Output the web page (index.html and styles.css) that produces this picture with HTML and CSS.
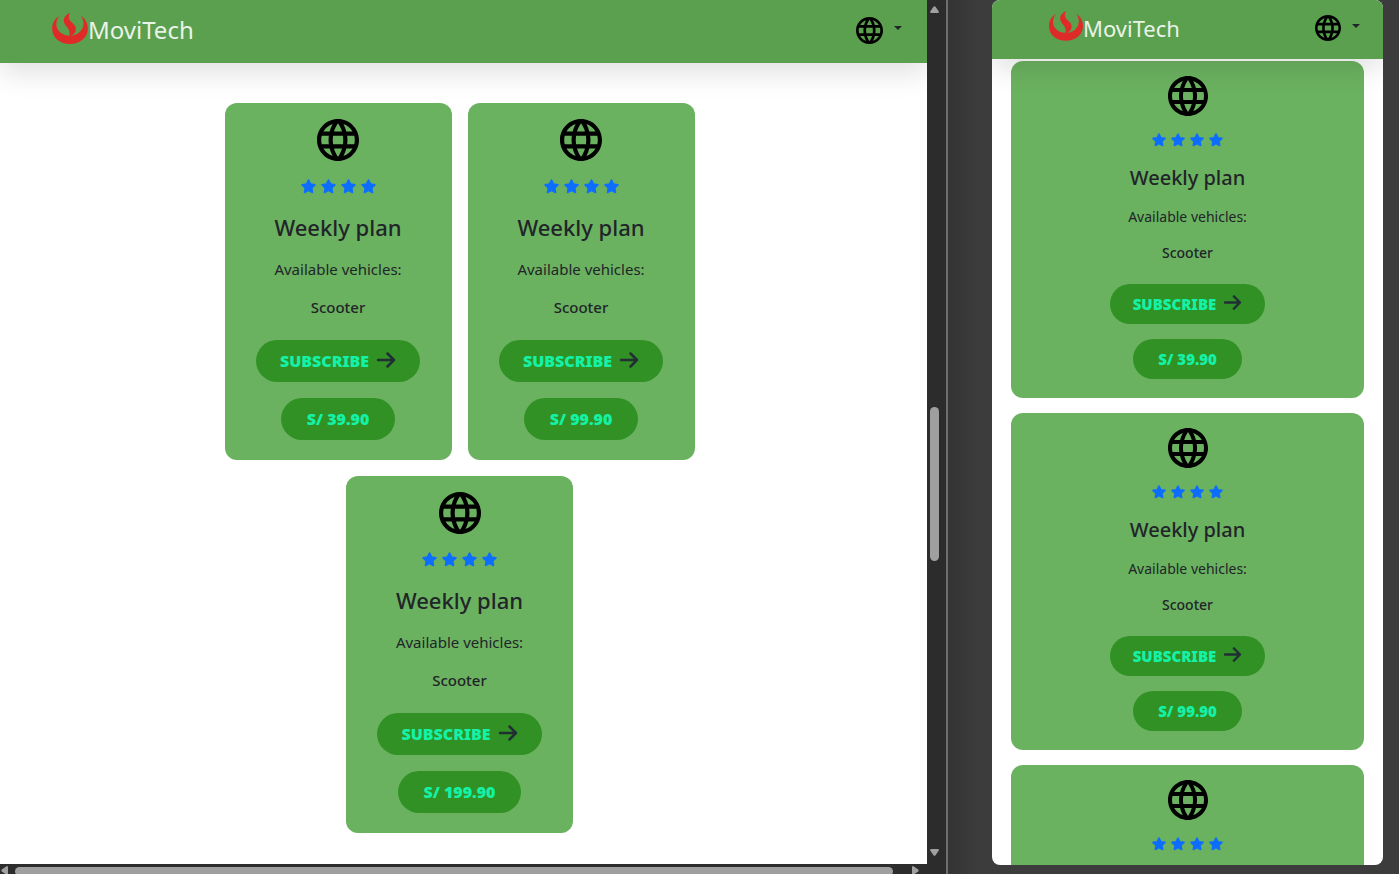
FILE: index.html
```html
<!DOCTYPE html>
<html lang="en">
<head>
<meta charset="utf-8">
<title>MoviTech</title>
<link rel="stylesheet" href="styles.css">
</head>
<body>
<svg class="sprite" aria-hidden="true">
  <symbol id="globe" viewBox="2 2 20 20"><path d="M11.99 2C6.47 2 2 6.48 2 12s4.47 10 9.99 10C17.52 22 22 17.52 22 12S17.52 2 11.99 2zm6.93 6h-2.95c-.32-1.25-.78-2.45-1.38-3.56 1.84.63 3.37 1.91 4.33 3.56zM12 4.04c.83 1.2 1.48 2.53 1.91 3.96h-3.82c.43-1.43 1.08-2.76 1.91-3.96zM4.26 14C4.1 13.36 4 12.69 4 12s.1-1.36.26-2h3.38c-.08.66-.14 1.32-.14 2 0 .68.06 1.34.14 2H4.26zm.82 2h2.95c.32 1.25.78 2.45 1.38 3.56-1.84-.63-3.37-1.9-4.33-3.56zm2.95-8H5.08c.96-1.66 2.49-2.93 4.33-3.56C8.81 5.55 8.35 6.75 8.03 8zM12 19.96c-.83-1.2-1.48-2.53-1.91-3.96h3.82c-.43 1.43-1.08 2.76-1.91 3.96zM14.34 14H9.66c-.09-.66-.16-1.32-.16-2 0-.68.07-1.35.16-2h4.68c.09.65.16 1.32.16 2 0 .68-.07 1.34-.16 2zm.25 5.56c.6-1.11 1.06-2.31 1.38-3.56h2.95c-.96 1.65-2.49 2.93-4.33 3.56zM16.36 14c.08-.66.14-1.32.14-2 0-.68-.06-1.34-.14-2h3.38c.16.64.26 1.31.26 2s-.1 1.36-.26 2h-3.38z"/></symbol>
  <symbol id="logo" viewBox="0 0 107 93"><path d="M22 8C7 17 0 31 0 47c0 27 24 46 53 46s54-19 54-46c0-16-7-30-21-39C95 22 97 36 89 49 83 60 71 67 56 69c10-4 16-12 15-23C70 32 52 28 50 14c0-6 1-10 4-14C42 4 34 14 35 24c1 14 15 20 17 33 1 5 0 8-1 11C37 67 25 62 18 51 9 38 12 20 22 8z"/></symbol>
  <symbol id="star" viewBox="0 0 20 20"><path d="M10 1.500l2.600 5.400 5.900.8-4.300 4.200 1 5.900-5.200-2.800-5.200 2.800 1-5.900-4.300-4.200 5.900-.8z" stroke-width="2.400" stroke-linejoin="round"/></symbol>
  <symbol id="arrow" viewBox="0 0 20 16"><path d="M2 8h16M11.500 1.500L18 8l-6.500 6.500" fill="none" stroke="currentColor" stroke-width="2.500" stroke-linecap="round" stroke-linejoin="round"/></symbol>
  <symbol id="tri" viewBox="0 0 9 7"><path d="M3.500.8q1-1 2 0l3.300 4.700q.4 1.500-1 1.500h-6.600q-1.400 0-1-1.500z"/></symbol>
</svg>
<div class="workspace">
  <section class="desktop">
    <main class="page">
      <header class="navbar">
        <a class="brand" href="#"><svg class="logo"><use href="#logo"/></svg>MoviTech</a>
        <button class="language" aria-label="Language"><svg class="language-icon"><use href="#globe"/></svg><span class="caret"></span></button>
      </header>
      <div class="plans">
        <article class="card">
          <svg class="globe"><use href="#globe"/></svg>
          <div class="stars"><svg><use href="#star"/></svg><svg><use href="#star"/></svg><svg><use href="#star"/></svg><svg><use href="#star"/></svg></div>
          <h2>Weekly plan</h2>
          <p>Available vehicles:</p>
          <p class="vehicle">Scooter</p>
          <button class="pill subscribe">SUBSCRIBE<svg class="arrow"><use href="#arrow"/></svg></button>
          <button class="pill">S/ 39.90</button>
        </article>
        <article class="card">
          <svg class="globe"><use href="#globe"/></svg>
          <div class="stars"><svg><use href="#star"/></svg><svg><use href="#star"/></svg><svg><use href="#star"/></svg><svg><use href="#star"/></svg></div>
          <h2>Weekly plan</h2>
          <p>Available vehicles:</p>
          <p class="vehicle">Scooter</p>
          <button class="pill subscribe">SUBSCRIBE<svg class="arrow"><use href="#arrow"/></svg></button>
          <button class="pill">S/ 99.90</button>
        </article>
        <article class="card">
          <svg class="globe"><use href="#globe"/></svg>
          <div class="stars"><svg><use href="#star"/></svg><svg><use href="#star"/></svg><svg><use href="#star"/></svg><svg><use href="#star"/></svg></div>
          <h2>Weekly plan</h2>
          <p>Available vehicles:</p>
          <p class="vehicle">Scooter</p>
          <button class="pill subscribe">SUBSCRIBE<svg class="arrow"><use href="#arrow"/></svg></button>
          <button class="pill">S/ 199.90</button>
        </article>
      </div>
    </main>
    <div class="vbar"><svg class="tri"><use href="#tri"/></svg><div class="vtrack"><span class="vspace-before"></span><span class="vthumb"></span><span class="vspace-after"></span></div><svg class="tri down"><use href="#tri"/></svg></div>
    <div class="hbar"><svg class="tri left"><use href="#tri"/></svg><span class="hthumb"></span><svg class="tri right"><use href="#tri"/></svg></div>
  </section>
  <section class="stage">
    <div class="phone">
      <header class="navbar">
        <a class="brand" href="#"><svg class="logo"><use href="#logo"/></svg>MoviTech</a>
        <button class="language" aria-label="Language"><svg class="language-icon"><use href="#globe"/></svg><span class="caret"></span></button>
      </header>
      <div class="plans">
        <article class="card">
          <svg class="globe"><use href="#globe"/></svg>
          <div class="stars"><svg><use href="#star"/></svg><svg><use href="#star"/></svg><svg><use href="#star"/></svg><svg><use href="#star"/></svg></div>
          <h2>Weekly plan</h2>
          <p>Available vehicles:</p>
          <p class="vehicle">Scooter</p>
          <button class="pill subscribe">SUBSCRIBE<svg class="arrow"><use href="#arrow"/></svg></button>
          <button class="pill">S/ 39.90</button>
        </article>
        <article class="card">
          <svg class="globe"><use href="#globe"/></svg>
          <div class="stars"><svg><use href="#star"/></svg><svg><use href="#star"/></svg><svg><use href="#star"/></svg><svg><use href="#star"/></svg></div>
          <h2>Weekly plan</h2>
          <p>Available vehicles:</p>
          <p class="vehicle">Scooter</p>
          <button class="pill subscribe">SUBSCRIBE<svg class="arrow"><use href="#arrow"/></svg></button>
          <button class="pill">S/ 99.90</button>
        </article>
        <article class="card">
          <svg class="globe"><use href="#globe"/></svg>
          <div class="stars"><svg><use href="#star"/></svg><svg><use href="#star"/></svg><svg><use href="#star"/></svg><svg><use href="#star"/></svg></div>
        </article>
      </div>
    </div>
  </section>
</div>
</body>
</html>
```

FILE: styles.css
```css
* { box-sizing: border-box; }

body {
  margin: 0;
  font-family: "Noto Sans", "Open Sans", sans-serif;
  font-size: 15px;
  color: #212529;
  background: #3c3c3c;
}

.sprite { position: absolute; width: 0; height: 0; }
svg { display: block; flex: none; }
button { font: inherit; border: 0; padding: 0; cursor: pointer; }

.workspace { display: flex; height: 100vh; overflow: hidden; }

/* Desktop preview */
.desktop {
  flex: 1;
  display: grid;
  grid-template-columns: 1fr 19px;
  grid-template-rows: 1fr 10px;
  background: #2c2c2c;
  min-width: 0;
}
.page { background: #fff; overflow: hidden; }

.navbar {
  position: relative;
  z-index: 1;
  display: flex;
  align-items: center;
  justify-content: space-between;
  height: 63px;
  padding: 0 25px 3px 52px;
  background: #5aa04f;
  box-shadow: 0 10px 28px rgba(0, 0, 0, .12);
}
.brand {
  display: flex;
  align-items: center;
  color: #eaf3e8;
  font-size: 24px;
  line-height: 32px;
  text-decoration: none;
}
.logo { width: 36px; height: 31px; margin-bottom: 3px; fill: #df2b28; }
.language { display: flex; align-items: center; gap: 11px; background: none; }
.language-icon { width: 27px; height: 27px; }
.caret {
  border: 4px solid transparent;
  border-top-color: #212529;
  border-bottom: 0;
  margin-bottom: 4px;
}

.plans {
  display: flex;
  flex-wrap: wrap;
  justify-content: center;
  gap: 16px;
  max-width: 600px;
  margin: 0 auto;
  padding: 40px 8px 0 0;
}
.card {
  display: flex;
  flex-direction: column;
  align-items: center;
  width: 227px;
  padding: 16px 16px 20px;
  border-radius: 12px;
  background: #6bb260;
}
.globe { width: 42px; height: 42px; }
.stars { display: flex; gap: 5px; margin: 18px 0; }
.stars svg { width: 15px; height: 15px; fill: #0d6efd; stroke: #0d6efd; }
.card h2 { margin: 0 0 15px; font-size: 22px; font-weight: 500; line-height: 30px; }
.card p { margin: 0 0 14px; line-height: 24px; }
.card .vehicle { margin-bottom: 21px; font-weight: 500; }
.pill {
  height: 42px;
  padding: 0 26px;
  border-radius: 21px;
  background: #319125;
  color: #13f2a6;
  font-size: 16px;
  font-weight: 900;
}
.subscribe { display: flex; align-items: center; gap: 7px; margin-bottom: 16px; padding: 0 24px; }
.arrow { width: 20px; height: 16px; margin-bottom: 3px; color: #212f35; }

/* Scroll bars */
.vbar { display: flex; flex-direction: column; padding: 6px 7px 8px 3px; }
.vtrack { flex: 1; display: flex; flex-direction: column; }
.vspace-before { flex: 394; }
.vthumb { flex: 154; width: 9px; border-radius: 5px; background: #9f9f9f; }
.vspace-after { flex: 288; }
.tri { width: 9px; height: 7px; fill: #a0a0a0; }
.down { transform: rotate(180deg); }
.left { transform: rotate(-90deg); }
.right { transform: rotate(90deg); }
.hbar {
  grid-column: 1 / -1;
  display: flex;
  align-items: flex-start;
  padding: 3px 26px 0 0;
}
.hthumb { flex: 1; height: 9px; margin: 0 18px 0 6px; border-radius: 5px; background: #9f9f9f; }

/* Phone preview */
.stage {
  flex: none;
  padding: 0 16px 9px 44px;
  border-left: 2px solid #6e6e6e;
  background: linear-gradient(90deg, #343434, #3c3c3c 30px);
}
.phone {
  width: 391px;
  height: 100%;
  overflow: hidden;
  border-radius: 8px;
  background: #fff;
  font-size: 14px;
}
.phone .navbar { height: 59px; padding: 0 23px 4px 57px; }
.phone .brand { font-size: 22px; }
.phone .logo { width: 34px; height: 30px; }
.phone .language-icon { width: 26px; height: 26px; }
.phone .plans { gap: 15px; padding: 2px 19px 0; }
.phone .card { width: 100%; padding: 15px 16px 19px; }
.phone .globe { width: 40px; height: 40px; }
.phone .stars { margin: 17px 0; }
.phone .stars svg { width: 14px; height: 14px; }
.phone .card h2 { margin-bottom: 13px; font-size: 20px; line-height: 28px; }
.phone .card p { margin-bottom: 12px; }
.phone .card .vehicle { margin-bottom: 19px; }
.phone .pill { height: 40px; padding: 0 25px; font-size: 15px; }
.phone .subscribe { gap: 7px; margin-bottom: 15px; padding: 0 23px; }
.phone .arrow { width: 19px; height: 15px; }
```
